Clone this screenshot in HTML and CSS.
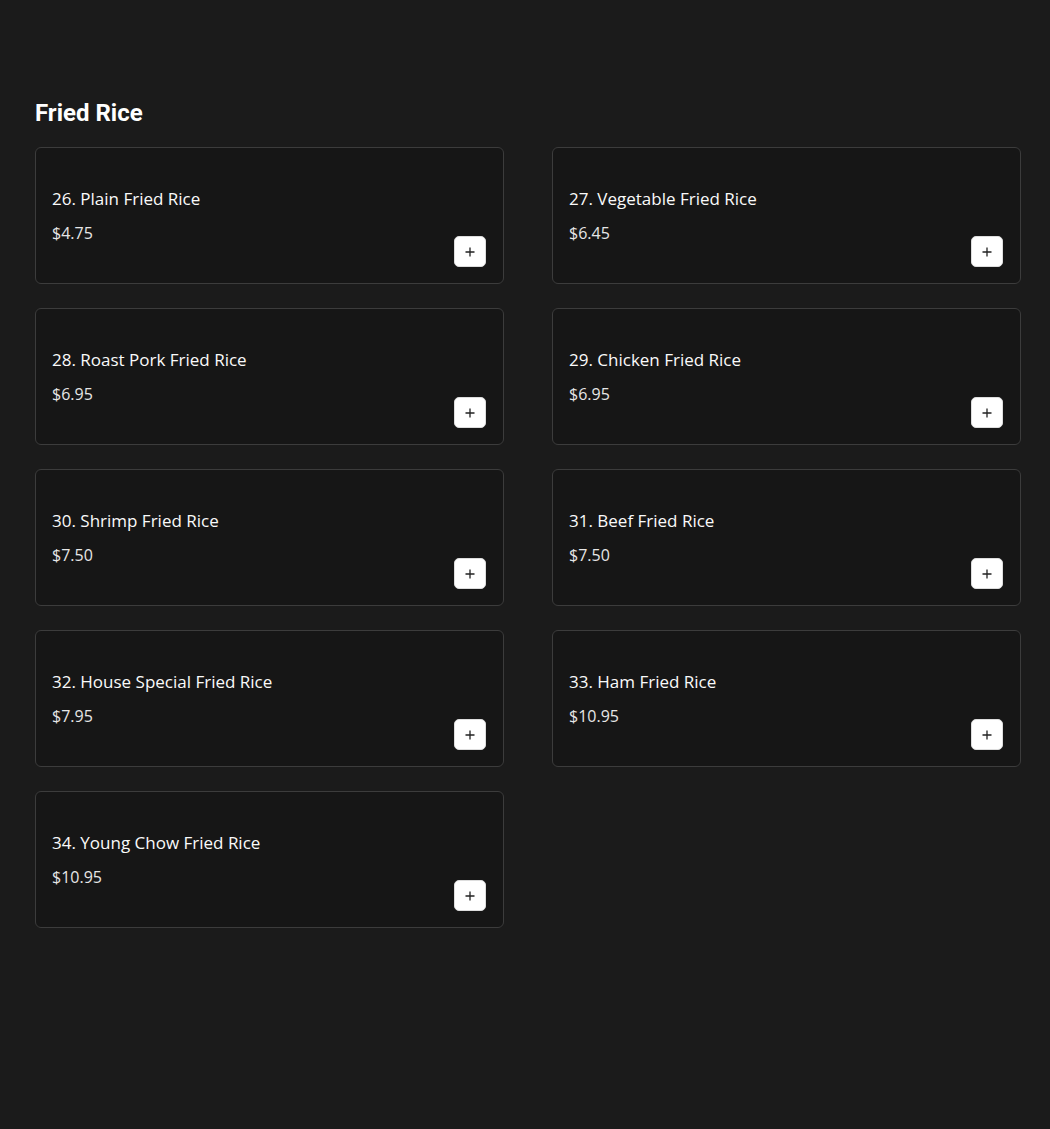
FILE: index.html
```html
<!DOCTYPE html>
<html lang="en">
<head>
<meta charset="utf-8">
<title>Fried Rice</title>
<link rel="stylesheet" href="styles.css">
</head>
<body>
<main class="page">
  <h2 class="section-title">Fried Rice</h2>
  <div class="grid">
    <div class="card"><div class="info"><div class="name">26. Plain Fried Rice</div><div class="price">$4.75</div></div><button class="add" aria-label="Add"><svg viewBox="0 0 12 12" width="12" height="12"><path d="M6 1.5v9M1.5 6h9" stroke="#222" stroke-width="1.3" fill="none"/></svg></button></div>
    <div class="card"><div class="info"><div class="name">27. Vegetable Fried Rice</div><div class="price">$6.45</div></div><button class="add" aria-label="Add"><svg viewBox="0 0 12 12" width="12" height="12"><path d="M6 1.5v9M1.5 6h9" stroke="#222" stroke-width="1.3" fill="none"/></svg></button></div>
    <div class="card"><div class="info"><div class="name">28. Roast Pork Fried Rice</div><div class="price">$6.95</div></div><button class="add" aria-label="Add"><svg viewBox="0 0 12 12" width="12" height="12"><path d="M6 1.5v9M1.5 6h9" stroke="#222" stroke-width="1.3" fill="none"/></svg></button></div>
    <div class="card"><div class="info"><div class="name">29. Chicken Fried Rice</div><div class="price">$6.95</div></div><button class="add" aria-label="Add"><svg viewBox="0 0 12 12" width="12" height="12"><path d="M6 1.5v9M1.5 6h9" stroke="#222" stroke-width="1.3" fill="none"/></svg></button></div>
    <div class="card"><div class="info"><div class="name">30. Shrimp Fried Rice</div><div class="price">$7.50</div></div><button class="add" aria-label="Add"><svg viewBox="0 0 12 12" width="12" height="12"><path d="M6 1.5v9M1.5 6h9" stroke="#222" stroke-width="1.3" fill="none"/></svg></button></div>
    <div class="card"><div class="info"><div class="name">31. Beef Fried Rice</div><div class="price">$7.50</div></div><button class="add" aria-label="Add"><svg viewBox="0 0 12 12" width="12" height="12"><path d="M6 1.5v9M1.5 6h9" stroke="#222" stroke-width="1.3" fill="none"/></svg></button></div>
    <div class="card"><div class="info"><div class="name">32. House Special Fried Rice</div><div class="price">$7.95</div></div><button class="add" aria-label="Add"><svg viewBox="0 0 12 12" width="12" height="12"><path d="M6 1.5v9M1.5 6h9" stroke="#222" stroke-width="1.3" fill="none"/></svg></button></div>
    <div class="card"><div class="info"><div class="name">33. Ham Fried Rice</div><div class="price">$10.95</div></div><button class="add" aria-label="Add"><svg viewBox="0 0 12 12" width="12" height="12"><path d="M6 1.5v9M1.5 6h9" stroke="#222" stroke-width="1.3" fill="none"/></svg></button></div>
    <div class="card"><div class="info"><div class="name">34. Young Chow Fried Rice</div><div class="price">$10.95</div></div><button class="add" aria-label="Add"><svg viewBox="0 0 12 12" width="12" height="12"><path d="M6 1.5v9M1.5 6h9" stroke="#222" stroke-width="1.3" fill="none"/></svg></button></div>
  </div>
</main>
</body>
</html>
```
FILE: styles.css
```css
html, body {
  margin: 0;
  background: #1b1b1b;
  color: #fff;
}
.page {
  padding: 98px 29px 0 35px;
  font-family: "Open Sans", "Liberation Sans", sans-serif;
}
.section-title {
  font-family: Roboto, "Liberation Sans", sans-serif;
  font-weight: 700;
  font-size: 24px;
  line-height: 30px;
  margin: 0 0 19px;
  color: #fff;
}
.grid {
  display: grid;
  grid-template-columns: 469px 469px;
  column-gap: 48px;
  row-gap: 24px;
}
.card {
  box-sizing: border-box;
  height: 137px;
  border: 1px solid #3c3c3c;
  border-radius: 6px;
  background: #161616;
  padding: 16px 17px 16px 16px;
  display: flex;
  align-items: center;
  justify-content: space-between;
}
.info {
  display: flex;
  flex-direction: column;
  gap: 10px;
  padding-top: 1px;
}
.name {
  font-size: 17px;
  font-weight: 500;
  line-height: 24px;
  color: #fafafa;
}
.price {
  font-size: 16px;
  line-height: 24px;
  color: #e6e6e6;
}
.add {
  align-self: flex-end;
  width: 32px;
  height: 31px;
  border: 1px solid #ddd;
  border-radius: 5px;
  background: #fff;
  padding: 0;
  display: flex;
  align-items: center;
  justify-content: center;
  cursor: pointer;
}
```
